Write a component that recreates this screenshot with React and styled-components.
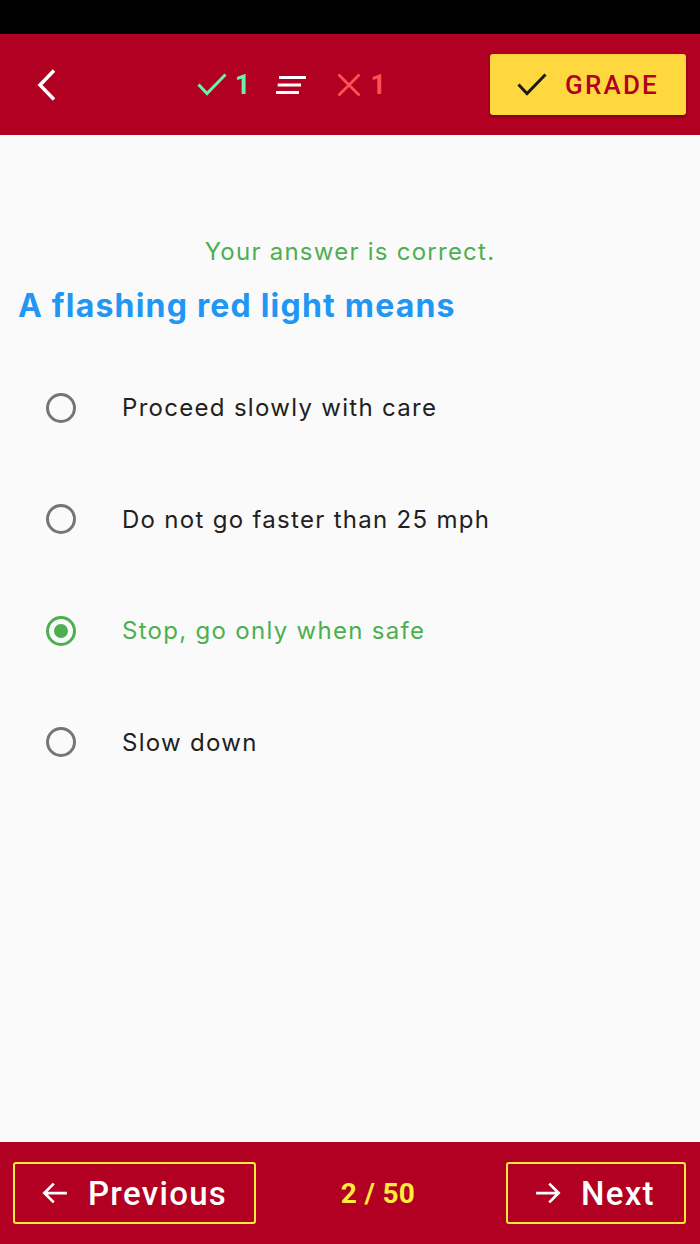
import React from "react";
import styled, { createGlobalStyle } from "styled-components";

const Global = createGlobalStyle`
  html, body { margin: 0; padding: 0; background: #fafafa; }
  body { font-family: Inter, "Noto Sans", sans-serif; }
`;

const Screen = styled.div`
  width: 700px;
  height: 1244px;
  display: flex;
  flex-direction: column;
  background: #fafafa;
`;

const StatusBar = styled.div`
  height: 34px;
  background: #000;
  flex: none;
`;

const Header = styled.header`
  height: 101px;
  flex: none;
  background: #b10021;
  display: flex;
  align-items: center;
  padding: 0 14px 0 34px;
`;

const IconButton = styled.button`
  width: 24px;
  height: 40px;
  border: 0;
  background: none;
  padding: 0;
  display: flex;
  align-items: center;
  justify-content: center;
`;

const Stats = styled.div`
  display: flex;
  align-items: center;
  margin-left: 139px;
`;

const Stat = styled.div`
  display: flex;
  align-items: center;
  gap: ${(p) => p.$inner}px;
  color: ${(p) => p.$color};
  font-family: Roboto, sans-serif;
  font-weight: 700;
  font-size: 27px;
  margin-right: ${(p) => p.$after || 0}px;
`;

const GradeButton = styled.button`
  margin-left: auto;
  width: 196px;
  height: 61px;
  background: #ffd83f;
  border: 0;
  border-radius: 3px;
  box-shadow: 0 2px 3px rgba(0, 0, 0, 0.35);
  display: flex;
  align-items: center;
  padding: 0 0 0 27px;
  gap: 18px;
  color: #b10021;
  font-family: Roboto, sans-serif;
  font-weight: 500;
  font-size: 26px;
  letter-spacing: 2.2px;
`;

const Content = styled.main`
  flex: 1;
  display: flex;
  flex-direction: column;
  padding-top: 101px;
`;

const Feedback = styled.div`
  text-align: center;
  color: #4caf50;
  font-size: 24px;
  line-height: 32px;
  letter-spacing: 1.25px;
`;

const Question = styled.h1`
  margin: 18px 0 0 18px;
  color: #2196f3;
  font-size: 32px;
  font-weight: 700;
  line-height: 40px;
  letter-spacing: 1.2px;
`;

const Options = styled.div`
  margin-top: 26px;
  display: flex;
  flex-direction: column;
`;

const Option = styled.label`
  height: 111.5px;
  display: flex;
  align-items: center;
  padding-left: 46px;
  gap: 46px;
  color: ${(p) => (p.$selected ? "#4caf50" : "#212121")};
  font-size: 24px;
  letter-spacing: 1.3px;
`;

const Radio = styled.span`
  width: 30px;
  height: 30px;
  box-sizing: border-box;
  border-radius: 50%;
  border: 3px solid ${(p) => (p.$selected ? "#4caf50" : "#757575")};
  display: flex;
  align-items: center;
  justify-content: center;
  flex: none;
  &::after {
    content: "";
    width: 14px;
    height: 14px;
    border-radius: 50%;
    background: #4caf50;
    display: ${(p) => (p.$selected ? "block" : "none")};
  }
`;

const Footer = styled.footer`
  height: 102px;
  flex: none;
  background: #b10021;
  display: flex;
  align-items: center;
  padding: 0 14px 0 13px;
`;

const NavButton = styled.button`
  width: ${(p) => p.$w}px;
  height: 62px;
  box-sizing: border-box;
  border: 2px solid #ffeb3b;
  border-radius: 3px;
  background: transparent;
  display: flex;
  align-items: center;
  padding-left: 25px;
  gap: 18px;
  color: #fff;
  font-family: Roboto, sans-serif;
  font-weight: 500;
  font-size: 33px;
  letter-spacing: 1.3px;
`;

const Counter = styled.div`
  flex: 1;
  text-align: center;
  color: #ffeb3b;
  font-family: Roboto, sans-serif;
  font-weight: 700;
  font-size: 28px;
  letter-spacing: 0.3px;
  padding-right: 6px;
`;

const CheckIcon = ({ color, sw = 3 }) => (
  <svg width="30" height="23" viewBox="0 0 30 23" fill="none">
    <path d="M1.5 11.5L10 20.5L28.5 1.5" stroke={color} strokeWidth={sw} />
  </svg>
);

export default function App() {
  const options = [
    "Proceed slowly with care",
    "Do not go faster than 25 mph",
    "Stop, go only when safe",
    "Slow down",
  ];
  return (
    <Screen>
      <Global />
      <StatusBar />
      <Header>
        <IconButton aria-label="back">
          <svg width="20" height="32" viewBox="0 0 20 32" fill="none">
            <path d="M18 1.5L4 16l14 14.5" stroke="#fff" strokeWidth="3.5" />
          </svg>
        </IconButton>
        <Stats>
          <Stat $color="#69f0ae" $inner={8} $after={25}>
            <CheckIcon color="#69f0ae" sw={3} />
            <span>1</span>
          </Stat>
          <Stat $after={31}>
            <svg width="30" height="20" viewBox="0 0 30 20" fill="none">
              <path d="M3 2.5h27M1.7 10h23.3M0 17.5h23" stroke="#fff" strokeWidth="3" />
            </svg>
          </Stat>
          <Stat $color="#ff5252" $inner={10}>
            <svg width="24" height="24" viewBox="0 0 24 24" fill="none">
              <path d="M1.5 1.5l21 21M22.5 1.5l-21 21" stroke="#ff5252" strokeWidth="2.8" />
            </svg>
            <span>1</span>
          </Stat>
        </Stats>
        <GradeButton>
          <CheckIcon color="#1a1a1a" sw={3} />
          GRADE
        </GradeButton>
      </Header>
      <Content>
        <Feedback>Your answer is correct.</Feedback>
        <Question>A flashing red light means</Question>
        <Options>
          {options.map((o, i) => (
            <Option key={o} $selected={i === 2}>
              <Radio $selected={i === 2} />
              {o}
            </Option>
          ))}
        </Options>
      </Content>
      <Footer>
        <NavButton $w={243}>
          <svg width="30" height="30" viewBox="0 0 24 24" fill="none">
            <path d="M21.5 12H3.5M11 4.5L3.5 12l7.5 7.5" stroke="#fff" strokeWidth="2.2" />
          </svg>
          Previous
        </NavButton>
        <Counter>2 / 50</Counter>
        <NavButton $w={180}>
          <svg width="30" height="30" viewBox="0 0 24 24" fill="none">
            <path d="M2.5 12h18M13 4.5l7.5 7.5-7.5 7.5" stroke="#fff" strokeWidth="2.2" />
          </svg>
          Next
        </NavButton>
      </Footer>
    </Screen>
  );
}
